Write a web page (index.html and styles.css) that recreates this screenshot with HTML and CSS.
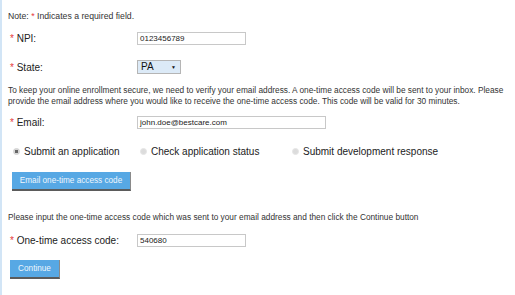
FILE: index.html
```html
<!DOCTYPE html>
<html lang="en">
<head>
	<meta charset="UTF-8">
	<title>Enrollment verification</title>
	<link rel="stylesheet" href="styles.css">
</head>
<body>
	<div id="page">
		<p class="note">Note: <span class="req">*</span> Indicates a required field.</p>

		<div class="row npi">
			<label class="lbl"><span class="req">*</span> NPI:</label>
			<div class="field short">0123456789</div>
		</div>

		<div class="row state">
			<label class="lbl"><span class="req">*</span> State:</label>
			<div class="select">PA<span class="arrow">&#9660;</span></div>
		</div>

		<p class="info">To keep your online enrollment secure, we need to verify your email address. A one-time access code will be sent to your inbox. Please provide the email address where you would like to receive the one-time access code. This code will be valid for 30 minutes.</p>

		<div class="row email">
			<label class="lbl"><span class="req">*</span> Email:</label>
			<div class="field long">john.doe@bestcare.com</div>
		</div>

		<div class="radios">
			<span class="opt first"><span class="radio on"></span>Submit an application</span>
			<span class="opt second"><span class="radio"></span>Check application status</span>
			<span class="opt"><span class="radio"></span>Submit development response</span>
		</div>

		<div class="btn send">Email one-time access code</div>

		<p class="info please">Please input the one-time access code which was sent to your email address and then click the Continue button</p>

		<div class="row code">
			<label class="lbl"><span class="req">*</span> One-time access code:</label>
			<div class="field short">540680</div>
		</div>

		<div class="btn go">Continue</div>
	</div>
</body>
</html>
```

FILE: styles.css
```css
html {
	height: 100%;
}
body {
	margin: 0;
	height: 100%;
	background: #fff;
	font-family: "Liberation Sans", Arial, sans-serif;
	color: #333;
}
#page {
	height: 100%;
	box-sizing: border-box;
	border-left: 2px solid #d2e5f6;
	padding: 11px 0 0 6px;
}
p {
	margin: 0;
}
.req {
	color: #e5383b;
}
.note {
	font-size: 8.7px;
	line-height: 10px;
}
.info {
	font-size: 8.3px;
	line-height: 11px;
	margin-top: 11px;
	padding-right: 6px;
}
.row {
	display: flex;
	align-items: center;
}
.lbl {
	width: 127px;
	padding-left: 2px;
	font-size: 10px;
	color: #222;
}
.npi {
	margin-top: 11px;
}
.state {
	margin-top: 15px;
}
.email {
	margin-top: 9px;
}
.field {
	box-sizing: border-box;
	height: 13px;
	border: 1px solid #c8c8c8;
	padding-left: 2px;
	font-size: 8px;
	line-height: 11px;
	color: #222;
}
.short {
	width: 109px;
}
.long {
	width: 189px;
}
.select {
	box-sizing: border-box;
	width: 44px;
	height: 14px;
	border: 1px solid #b5b5b5;
	background: #dceaf7;
	padding: 0 4px 0 3px;
	font-size: 10px;
	line-height: 12px;
	color: #111;
	display: flex;
	justify-content: space-between;
}
.arrow {
	font-size: 5px;
}
.radios {
	display: flex;
	align-items: center;
	margin-top: 16px;
	height: 12px;
	font-size: 10px;
	color: #222;
}
.opt {
	display: flex;
	align-items: center;
}
.first {
	width: 127px;
	padding-left: 5px;
}
.second {
	width: 152px;
}
.radio {
	width: 7px;
	height: 7px;
	border-radius: 50%;
	background: #dcdcdc;
	margin-right: 4px;
	box-sizing: border-box;
	border: 1px solid #e6e6e6;
}
.radio.on {
	background: radial-gradient(circle, #666 0 1.6px, #d8d8d8 2px);
	border-color: #cfcfcf;
}
.btn {
	box-sizing: border-box;
	display: inline-block;
	height: 19px;
	background: #57a8e4;
	border-bottom: 2px solid #5b5b5b;
	border-right: 1px solid #8a8a8a;
	color: #eef6fd;
	font-size: 8.2px;
	line-height: 17px;
	text-align: center;
}
.send {
	display: block;
	width: 119px;
	margin: 15px 0 0 4px;
}
.please {
	margin-top: 21px;
}
.code {
	margin-top: 11px;
}
.go {
	display: block;
	width: 50px;
	margin: 13px 0 0 2px;
}
```
